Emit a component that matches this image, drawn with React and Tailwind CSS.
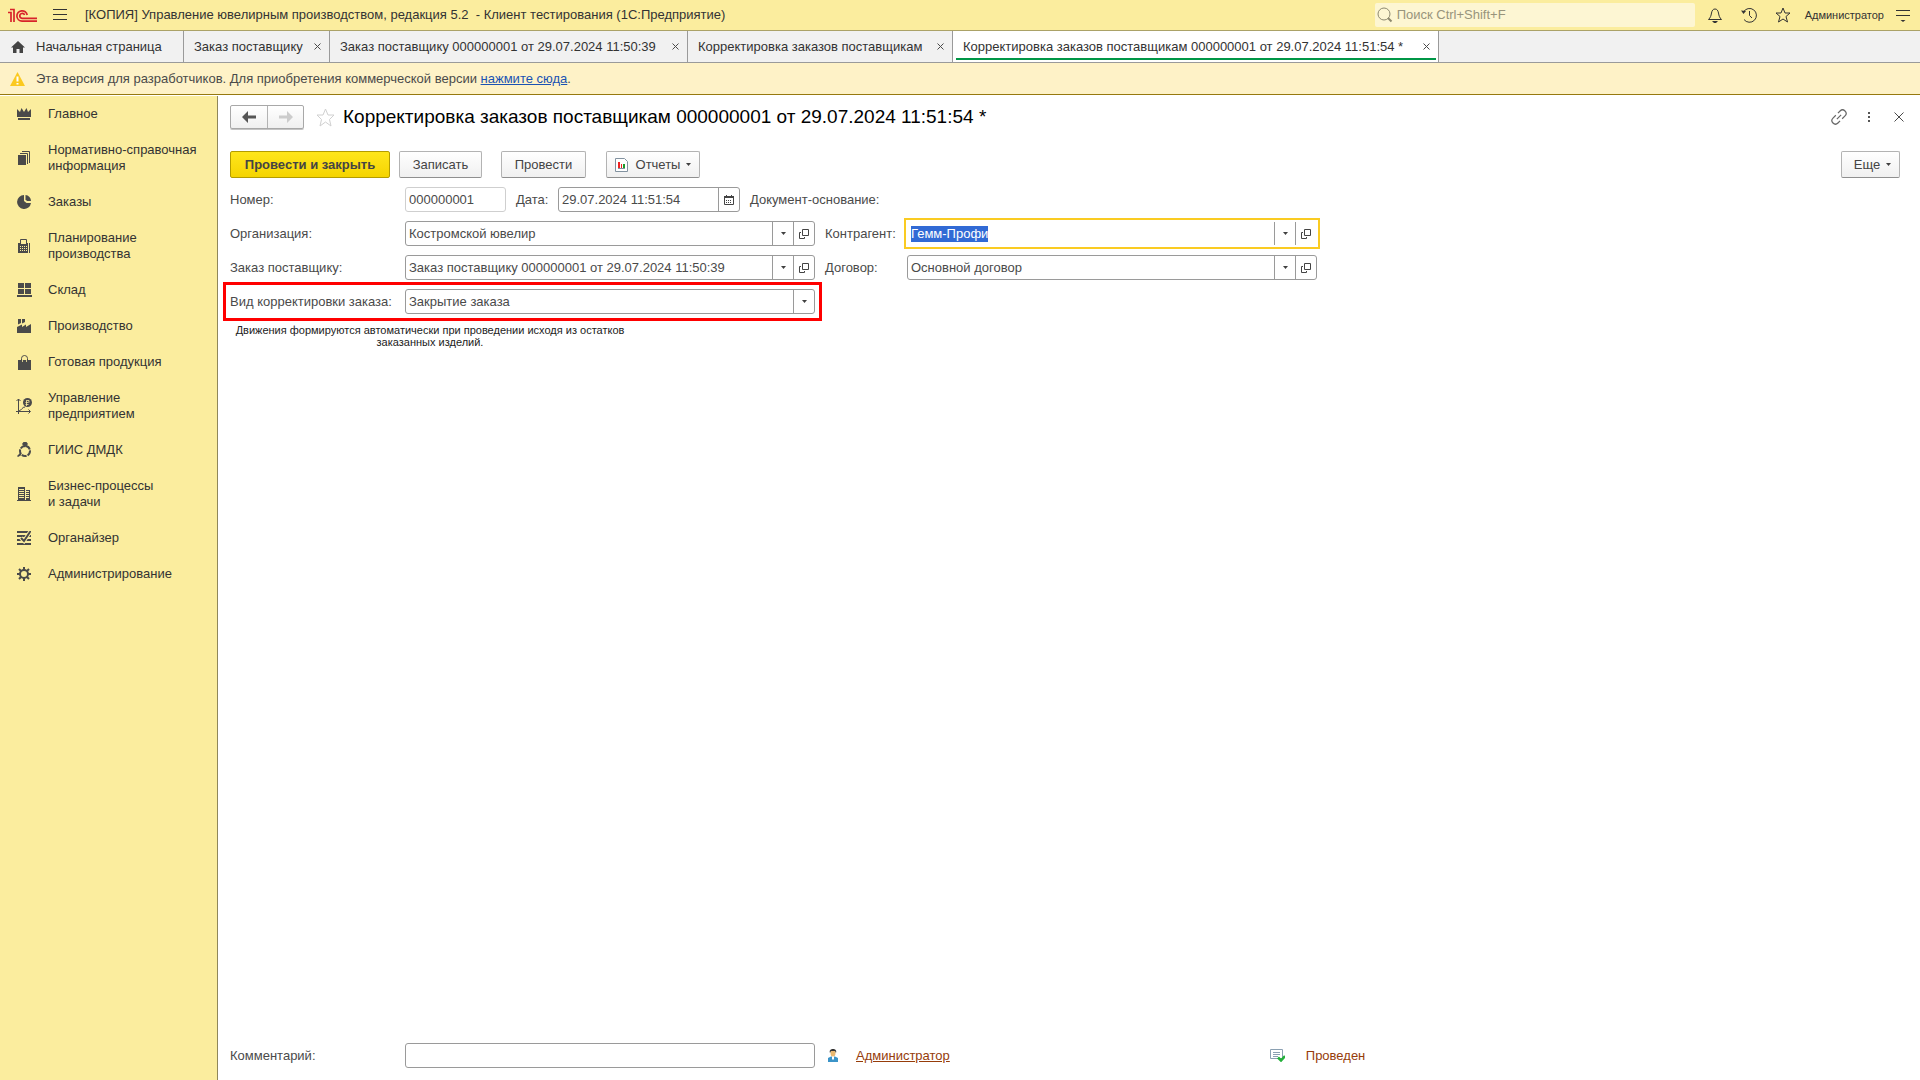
import React from 'react';

const ink = '#4a4a4a';

function Icon({ w = 16, h = w, children, className = '' }) {
  return (
    <svg width={w} height={h} viewBox={`0 0 ${w} ${h}`} className={'shrink-0 ' + className} aria-hidden="true">
      {children}
    </svg>
  );
}

const Close = ({ size = 7 }) => (
  <Icon w={size}>
    <path d={`M.5 .5L${size - 0.5} ${size - 0.5}M${size - 0.5} .5L.5 ${size - 0.5}`} stroke="#4a4a4a" fill="none" />
  </Icon>
);

const Caret = () => (
  <Icon w={5} h={3}><path d="M0 0h5L2.500 3z" fill="#404040" /></Icon>
);

const OpenIcon = () => (
  <Icon w={10} h={10}>
    <path d="M3.500 .5h6v6h-6zM2 3.500H.5v6h5V8" fill="none" stroke="#444" />
  </Icon>
);

const icons = {
  crown: <Icon w={14} h={12}><path d="M0 1l3 3 1.500-4 2.500 4L9.500 0 11 4l3-3v8H0zM1 10h12v2H1z" fill={ink} /></Icon>,
  docs: <Icon w={13} h={14}><path d="M0 4h8v10H0z" fill={ink} /><path d="M2 2.500h7.500V13M4 .5h7.500V12" fill="none" stroke={ink} /></Icon>,
  pie: <Icon w={14}><path d="M7 0A7 7 0 1 0 14 8H9.500L7 6z" fill={ink} /><path d="M8.500 0A6 6 0 0 1 14 6H10L8.500 4.500z" fill={ink} /></Icon>,
  calc: <Icon w={13} h={14}><path d="M2.500 .5h6v4h-6z" fill="none" stroke={ink} /><path d="M0 4h10v10H0zM11 4h1v10h-1z" fill={ink} /><path d="M2 7.500h7M2 9.500h7M2 11.500h7" stroke="#fbed9e" strokeDasharray="1 1" /><path d="M3 3h5v2H3z" fill="#fbed9e" /></Icon>,
  store: <Icon w={15} h={14}><path d="M1 0h6v5H1zM8 0h6v5H8zM1 6h6v5H1zM8 6h6v5H8zM0 12h15v2H0z" fill={ink} /></Icon>,
  factory: <Icon w={14}><path d="M0 14V8l5-2.500V8l4-2.500V8l5-3v9zM1 0h3v4L1 5.500zM5 0h3v3L5 4.500z" fill={ink} /></Icon>,
  bag: <Icon w={13} h={15}><path d="M0 5h13v10H0z" fill={ink} /><path d="M3.500 5V3.500a3 3 0 0 1 6 0V5" fill="none" stroke={ink} /><path d="M4.500 7V4a2 2 0 0 1 4 0v3" fill="none" stroke="#fbed9e" strokeWidth=".8" /></Icon>,
  chart: <Icon w={16} h={16}><path d="M2.500 1v15M0 13.500h14M.5 3l2-2 2 2M12.500 11.500l2 2-2 2M3 13c3-1 3-4 6-4" fill="none" stroke={ink} /><circle cx="11.500" cy="4.500" r="4.500" fill={ink} /><path d="M9.500 6.500h3M9.500 4.500h3M11 2.500h2v2M10.500 2v6" fill="none" stroke="#fbed9e" strokeWidth=".8" /></Icon>,
  ring: <Icon w={15} h={16}><circle cx="8" cy="9" r="5" fill="none" stroke={ink} strokeWidth="2" strokeDasharray="5 1" /><path d="M5 2l1.500-2h3L11 2 8 5.500zM0 14l3-3 1.500 2L1 15z" fill={ink} /></Icon>,
  building: <Icon w={14}><path d="M1 0h7v14H1zM9 3h4v11H9zM0 13h14v1H0z" fill={ink} /><path d="M2 2.500h5M2 4.500h5M2 6.500h5M2 8.500h5M2 10.500h5M9 4.500h3M9 6.500h3M9 8.500h3M9 10.500h3" stroke="#fbed9e" /></Icon>,
  organizer: <Icon w={14}><path d="M0 1h14M0 5h14M0 9h14M0 13h14" stroke={ink} strokeWidth="2" /><path d="M13 1L7 10 4 7" fill="none" stroke="#fbed9e" strokeWidth="4" /><path d="M13 1L7 10 4 7" fill="none" stroke={ink} strokeWidth="2" /></Icon>,
  gear: <Icon w={14}><circle cx="7" cy="7" r="4" fill="none" stroke={ink} strokeWidth="2" /><path d="M7 0v3M7 11v3M0 7h3M11 7h3M2 2l2 2M10 10l2 2M2 12l2-2M10 4l2-2" stroke={ink} strokeWidth="2" /></Icon>,
};

const sections = [
  ['crown', 'Главное'],
  ['docs', 'Нормативно-справочная', 'информация'],
  ['pie', 'Заказы'],
  ['calc', 'Планирование', 'производства'],
  ['store', 'Склад'],
  ['factory', 'Производство'],
  ['bag', 'Готовая продукция'],
  ['chart', 'Управление', 'предприятием'],
  ['ring', 'ГИИС ДМДК'],
  ['building', 'Бизнес-процессы', 'и задачи'],
  ['organizer', 'Органайзер'],
  ['gear', 'Администрирование'],
];

function TopBar() {
  return (
    <header className="flex h-[31px] shrink-0 items-center border-b border-[#aba267] bg-[#fbed9e] pl-2 pr-2.5 text-[#333]">
      <Icon w={29} h={18}>
        <g fill="none" stroke="#d8232a" strokeWidth="1.700">
          <path d="M0 6.500h3V16M2 3.500h4V16" />
          <path d="M19.200 9A5.200 5.200 0 1 0 14 15.200H29" />
          <path d="M16.600 9A2.500 2.500 0 1 0 14 12.400H29" />
        </g>
      </Icon>
      <button className="ml-4 flex h-6 w-4 items-center" aria-label="Меню">
        <Icon w={14} h={12}><path d="M0 .5h14M0 5.500h14M0 10.500h14" stroke="#333" /></Icon>
      </button>
      <h1 className="ml-4 whitespace-pre">[КОПИЯ] Управление ювелирным производством, редакция 5.2  - Клиент тестирования (1С:Предприятие)</h1>
      <label className="ml-auto flex h-6 w-80 items-center gap-1 rounded-xs bg-[#fdf6d3] pl-0.5">
        <Icon w={16}><circle cx="7" cy="7" r="6" fill="none" stroke="#8d8970" /><path d="M11 11l3.500 3.500" stroke="#8d8970" strokeWidth="2" /></Icon>
        <input aria-label="Поиск" placeholder="Поиск Ctrl+Shift+F" className="min-w-0 flex-1 bg-transparent outline-none placeholder:text-[#98947c]" />
      </label>
      <button className="ml-3 flex w-4 justify-center" aria-label="Оповещения">
        <Icon w={14} h={15}><path d="M.5 11.500h13C11.500 9.500 11 8 10.500 5 10 2.500 9 1 7 1S4 2.500 3.500 5C3 8 2.500 9.500 .5 11.500z" fill="none" stroke="#333" /><path d="M4 13h6l-2 2H6z" fill="#333" /></Icon>
      </button>
      <button className="ml-[18px] flex w-4 justify-center" aria-label="История">
        <Icon w={16}><path d="M2.500 5A6.900 6.900 0 1 1 3 12.500" fill="none" stroke="#333" /><path d="M0 3.500l5 .5-2.500 3z" fill="#333" /><path d="M8.500 4v4.500l2.500 2.500" fill="none" stroke="#333" /></Icon>
      </button>
      <button className="ml-[18px] flex w-4 justify-center" aria-label="Избранное">
        <Icon w={16}><path d="M8 1l2 5h5l-4 3.500 1.500 5.500L8 12l-4.500 3L5 9.500 1 6h5z" fill="none" stroke="#333" /></Icon>
      </button>
      <span className="ml-3.5 text-[11px]">Администратор</span>
      <button className="ml-3 flex" aria-label="Сервис">
        <Icon w={14}><path d="M0 2.500h14M0 7.500h14" stroke="#333" /><path d="M4.500 12h5L7 14z" fill="#333" /></Icon>
      </button>
    </header>
  );
}

function Tab({ children, active, width }) {
  return (
    <div className={'relative flex items-center justify-between border-r border-[#9a9a9a] pl-2.5 pr-1 ' + width + (active ? ' bg-white' : '')}>
      <button className="whitespace-nowrap">{children}</button>
      <button className="flex size-4 items-center justify-center" aria-label="Закрыть"><Close /></button>
      {active && <span className="absolute bottom-0.5 left-[3px] right-0.5 h-0.5 bg-[#009646]" />}
    </div>
  );
}

function Tabs() {
  return (
    <nav className="flex h-8 shrink-0 border-b border-[#9a9a9a] bg-[#f1f1f1] text-[#333]">
      <button className="flex w-[184px] items-center border-r border-[#9a9a9a] pl-[11px]">
        <Icon w={14} h={12}><path d="M7 0l7 6.500h-2V12H8.500V8h-3v4H2V6.500H0z" fill="#444" /></Icon>
        <span className="ml-[11px]">Начальная страница</span>
      </button>
      <Tab width="min-w-[146px]">Заказ поставщику</Tab>
      <Tab width="min-w-[358px]">Заказ поставщику 000000001 от 29.07.2024 11:50:39</Tab>
      <Tab width="min-w-[265px]">Корректировка заказов поставщикам</Tab>
      <Tab active width="min-w-[486px]">Корректировка заказов поставщикам 000000001 от 29.07.2024 11:51:54 *</Tab>
    </nav>
  );
}

const btn = 'flex h-[27px] items-center justify-center rounded-xs border border-[#b3b3b3] border-b-[#8f8f8f] bg-linear-to-b from-white to-[#f0f0f0]';

function Field({ id, value, caret, open, focused, className = '', strong = true }) {
  const line = focused ? 'border-transparent' : strong ? 'rounded-[3px] border-[#9a9a9a]' : 'rounded-[3px] border-[#cfcfcf]';
  return (
    <div className={'flex h-[25px] border bg-white ' + line + ' ' + (focused ? 'outline-2 outline-offset-1 outline-[#facb22] ' : '') + className}>
      <div className="flex min-w-0 flex-1 items-center pl-[3px]">
        <input id={id} defaultValue={value} className={focused ? 'field-sizing-content bg-[#316ad5] text-white outline-none' : 'w-full bg-transparent outline-none'} />
      </div>
      {caret && <button className="flex w-[21px] items-center justify-center border-l border-[#9a9a9a]" aria-label="Выбрать"><Caret /></button>}
      {open && <button className="flex w-[21px] items-center justify-center border-l border-[#9a9a9a]" aria-label="Открыть"><OpenIcon /></button>}
    </div>
  );
}

function Sidebar() {
  return (
    <aside className="mt-px w-[218px] shrink-0 border-r border-[#8f875a] bg-[#fbed9e] text-[#333]">
      {sections.map(([icon, ...lines]) => (
        <a href="#" key={icon} className="flex items-center py-2.5 leading-4">
          <span className="flex w-12 justify-center">{icons[icon]}</span>
          <span>{lines.map((l) => <span key={l} className="block">{l}</span>)}</span>
        </a>
      ))}
    </aside>
  );
}

function Form() {
  return (
    <main className="flex min-w-0 flex-1 flex-col bg-white pl-3 pr-5">
      <div className="mt-2.5 flex h-6 items-center">
        <div className="flex h-6 rounded-xs border border-[#a8a8a8] bg-linear-to-b from-white to-[#f0f0f0] shadow-[0_1px_0_#c4c4c4]">
          <button className="flex w-[37px] items-center justify-center border-r border-[#b3b3b3]" aria-label="Назад">
            <Icon w={14} h={12}><path d="M6 0L0 6l6 6V7.500h8v-3H6z" fill="#555" /></Icon>
          </button>
          <button className="flex w-[35px] items-center justify-center" aria-label="Вперед">
            <Icon w={14} h={12}><path d="M8 0l6 6-6 6V7.500H0v-3h8z" fill="#ccc" /></Icon>
          </button>
        </div>
        <button className="ml-3 flex" aria-label="В избранное">
          <Icon w={19}><path d="M9.500 1l2.500 6h6l-4.500 4.500L15 18l-5.500-4L4 18l1.500-6.500L1 7h6z" fill="none" stroke="#d0d0d0" /></Icon>
        </button>
        <h2 className="ml-2 whitespace-nowrap text-[19px] text-black">Корректировка заказов поставщикам 000000001 от 29.07.2024 11:51:54 *</h2>
        <div className="ml-auto flex items-center">
          <button aria-label="Ссылка" className="mr-5"><Icon w={16}><g transform="rotate(-45 8 8)" fill="none" stroke="#666" strokeWidth="1.200"><path d="M7 4.500H3a3.500 3.500 0 0 0 0 7h3M9 11.500h4a3.500 3.500 0 0 0 0-7h-3M5 8h6" /></g></Icon></button>
          <button aria-label="Ещё действия" className="mr-[23px]"><Icon w={4} h={12}><path d="M1 1h2v2H1zM1 5h2v2H1zM1 9h2v2H1z" fill="#555" /></Icon></button>
          <button aria-label="Закрыть форму" className="-mr-1"><Close size={10} /></button>
        </div>
      </div>

      <div className="mt-[22px] flex text-[#444]">
        <button className="flex h-[27px] w-40 items-center justify-center rounded-xs border border-[#b39c00] bg-linear-to-b from-[#ffe61a] to-[#f5d400] font-bold">Провести и закрыть</button>
        <button className={btn + ' ml-[9px] w-[83px]'}>Записать</button>
        <button className={btn + ' ml-[19px] w-[85px]'}>Провести</button>
        <button className={btn + ' ml-5 w-[94px]'}>
          <Icon w={13} h={14}><path d="M.5 .5h9l3 3v10H.5z" fill="#fff" stroke="#8292a0" /><path d="M4 4v6" stroke="#e22" strokeWidth="2" /><path d="M6.500 6v4" stroke="#e22" /><path d="M9 6v4" stroke="#1a9a2a" strokeWidth="2" /><path d="M3 10.500h7" stroke="#8292a0" /></Icon>
          <span className="ml-2 mr-1.5">Отчеты</span><Caret />
        </button>
        <button className={btn + ' ml-auto w-[59px] pl-1'}><span className="mr-1.5">Еще</span><Caret /></button>
      </div>

      <div className="mt-[9px] flex flex-col gap-[9px]">
        <div className="flex items-center">
          <label htmlFor="num" className="w-[175px]">Номер:</label>
          <Field id="num" value="000000001" strong={false} className="w-[101px]" />
          <label htmlFor="date" className="ml-2.5 w-[42px]">Дата:</label>
          <div className="flex h-[25px] w-[182px] rounded-[3px] border border-[#9a9a9a]">
            <input id="date" defaultValue="29.07.2024 11:51:54" className="min-w-0 flex-1 pl-[3px] outline-none" />
            <button className="flex w-[21px] items-center justify-center border-l border-[#9a9a9a]" aria-label="Календарь">
              <Icon w={10} h={10}><path d="M.5 1.500h9v8h-9z" fill="none" stroke="#444" /><path d="M0 1h10v2H0zM2 0h1v1H2zM7 0h1v1H7z" fill="#444" /><path d="M2 5.500h6M2 7.500h6" stroke="#444" strokeDasharray="1 1" /></Icon>
            </button>
          </div>
          <span className="ml-2.5">Документ-основание:</span>
        </div>
        <div className="flex items-center">
          <label htmlFor="org" className="w-[175px]">Организация:</label>
          <Field id="org" value="Костромской ювелир" caret open className="w-[410px]" />
          <label htmlFor="partner" className="ml-2.5 w-[82px]">Контрагент:</label>
          <Field id="partner" value="Гемм-Профи" caret open focused className="w-[410px]" />
        </div>
        <div className="flex items-center">
          <label htmlFor="order" className="w-[175px]">Заказ поставщику:</label>
          <Field id="order" value="Заказ поставщику 000000001 от 29.07.2024 11:50:39" caret open className="w-[410px]" />
          <label htmlFor="contract" className="ml-2.5 w-[82px]">Договор:</label>
          <Field id="contract" value="Основной договор" caret open className="w-[410px]" />
        </div>
        <div className="relative flex items-center self-start">
          <label htmlFor="kind" className="w-[175px]">Вид корректировки заказа:</label>
          <Field id="kind" value="Закрытие заказа" caret className="w-[410px]" />
          <span className="pointer-events-none absolute -inset-[7px] border-[3px] border-[#f00]" />
        </div>
      </div>
      <p className="mt-2.5 w-[400px] text-center text-[11px] leading-3 text-[#222]">Движения формируются автоматически при проведении исходя из остатков заказанных изделий.</p>

      <footer className="mb-3 mt-auto flex items-center">
        <label htmlFor="comment" className="w-[175px]">Комментарий:</label>
        <Field id="comment" value="" className="w-[410px]" />
        <Icon w={12} h={13} className="ml-3"><path d="M1 13V9l3-1.500h4L11 9v4z" fill="#3b94c8" /><path d="M5 7h2v3L6 11 5 10z" fill="#fff" /><ellipse cx="6" cy="4" rx="2.500" ry="3.500" fill="#e9b870" /><path d="M3 4C2 1 4 0 6 0s4 1 3 4L8 2H4z" fill="#333" /></Icon>
        <a href="#" className="ml-[17px] text-[#963c0a] underline">Администратор</a>
        <Icon w={15} h={13} className="ml-80"><path d="M.5 .5h12v9H.5z" fill="#fff" stroke="#8ba0b2" /><path d="M3 3.500h7M3 5.500h7M3 7.500h5" stroke="#8ba0b2" /><path d="M8 8.500l3 3L15 7" fill="none" stroke="#23b03a" strokeWidth="2.500" /></Icon>
        <span className="ml-[21px] text-[#963c0a]">Проведен</span>
      </footer>
    </main>
  );
}

export default function App() {
  return (
    <div className="flex min-h-screen flex-col bg-white font-['Liberation_Sans',Arial,sans-serif] text-[13px] leading-4 text-[#4a4a4a]">
      <TopBar />
      <Tabs />
      <div className="flex h-8 shrink-0 items-center border-b border-[#96790f] bg-[#fef2c7] pl-2.5">
        <Icon w={15} h={14}><path d="M7.500 0L15 14H0z" fill="#fbc91f" /><path d="M7.500 4.500v5M7.500 11v1.500" stroke="#fff" strokeWidth="2" /></Icon>
        <p className="ml-[11px]">Эта версия для разработчиков. Для приобретения коммерческой версии <a href="#" className="text-[#1a52b3] underline">нажмите сюда</a>.</p>
      </div>
      <div className="flex flex-1">
        <Sidebar />
        <Form />
      </div>
    </div>
  );
}
